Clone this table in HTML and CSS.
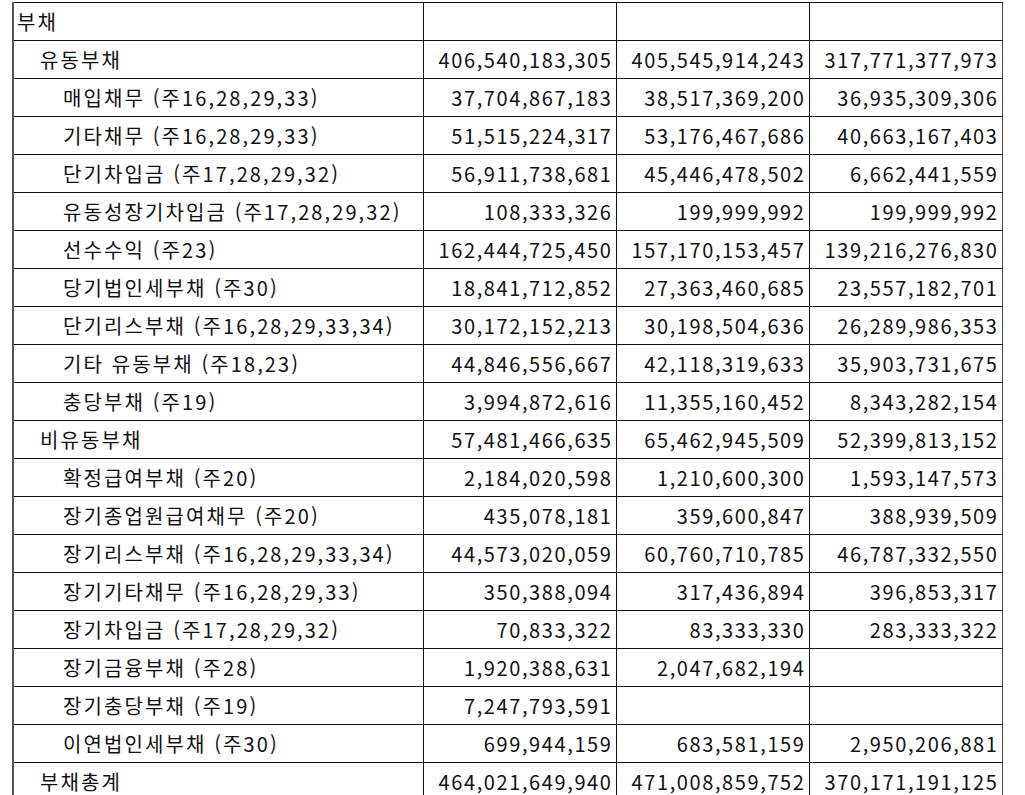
FILE: index.html
```html
<!DOCTYPE html>
<html lang="ko">
<head>
<meta charset="utf-8">
<link rel="stylesheet" href="styles.css">
</head>
<body>
<table class="fs">
<colgroup><col class="c-label"><col class="c-num"><col class="c-num"><col class="c-num"></colgroup>
<tbody>
<tr><td class="l0">부채</td><td></td><td></td><td></td></tr>
<tr><td class="l1">유동부채</td><td class="n">406,540,183,305</td><td class="n">405,545,914,243</td><td class="n">317,771,377,973</td></tr>
<tr><td class="l2">매입채무 (주16,28,29,33)</td><td class="n">37,704,867,183</td><td class="n">38,517,369,200</td><td class="n">36,935,309,306</td></tr>
<tr><td class="l2">기타채무 (주16,28,29,33)</td><td class="n">51,515,224,317</td><td class="n">53,176,467,686</td><td class="n">40,663,167,403</td></tr>
<tr><td class="l2">단기차입금 (주17,28,29,32)</td><td class="n">56,911,738,681</td><td class="n">45,446,478,502</td><td class="n">6,662,441,559</td></tr>
<tr><td class="l2">유동성장기차입금 (주17,28,29,32)</td><td class="n">108,333,326</td><td class="n">199,999,992</td><td class="n">199,999,992</td></tr>
<tr><td class="l2">선수수익 (주23)</td><td class="n">162,444,725,450</td><td class="n">157,170,153,457</td><td class="n">139,216,276,830</td></tr>
<tr><td class="l2">당기법인세부채 (주30)</td><td class="n">18,841,712,852</td><td class="n">27,363,460,685</td><td class="n">23,557,182,701</td></tr>
<tr><td class="l2">단기리스부채 (주16,28,29,33,34)</td><td class="n">30,172,152,213</td><td class="n">30,198,504,636</td><td class="n">26,289,986,353</td></tr>
<tr><td class="l2">기타 유동부채 (주18,23)</td><td class="n">44,846,556,667</td><td class="n">42,118,319,633</td><td class="n">35,903,731,675</td></tr>
<tr><td class="l2">충당부채 (주19)</td><td class="n">3,994,872,616</td><td class="n">11,355,160,452</td><td class="n">8,343,282,154</td></tr>
<tr><td class="l1">비유동부채</td><td class="n">57,481,466,635</td><td class="n">65,462,945,509</td><td class="n">52,399,813,152</td></tr>
<tr><td class="l2">확정급여부채 (주20)</td><td class="n">2,184,020,598</td><td class="n">1,210,600,300</td><td class="n">1,593,147,573</td></tr>
<tr><td class="l2">장기종업원급여채무 (주20)</td><td class="n">435,078,181</td><td class="n">359,600,847</td><td class="n">388,939,509</td></tr>
<tr><td class="l2">장기리스부채 (주16,28,29,33,34)</td><td class="n">44,573,020,059</td><td class="n">60,760,710,785</td><td class="n">46,787,332,550</td></tr>
<tr><td class="l2">장기기타채무 (주16,28,29,33)</td><td class="n">350,388,094</td><td class="n">317,436,894</td><td class="n">396,853,317</td></tr>
<tr><td class="l2">장기차입금 (주17,28,29,32)</td><td class="n">70,833,322</td><td class="n">83,333,330</td><td class="n">283,333,322</td></tr>
<tr><td class="l2">장기금융부채 (주28)</td><td class="n">1,920,388,631</td><td class="n">2,047,682,194</td><td class="n"></td></tr>
<tr><td class="l2">장기충당부채 (주19)</td><td class="n">7,247,793,591</td><td class="n"></td><td class="n"></td></tr>
<tr><td class="l2">이연법인세부채 (주30)</td><td class="n">699,944,159</td><td class="n">683,581,159</td><td class="n">2,950,206,881</td></tr>
<tr><td class="l1">부채총계</td><td class="n">464,021,649,940</td><td class="n">471,008,859,752</td><td class="n">370,171,191,125</td></tr>
</tbody>
</table>
</body>
</html>
```
FILE: styles.css
```css
html, body {
  margin: 0;
  padding: 0;
  background: #fff;
}
body {
  padding: 2px 0 0 12px;
  font-family: "Noto Sans CJK KR", "Noto Sans", sans-serif;
  font-size: 20px;
  color: #111;
}
.fs {
  border-collapse: collapse;
  table-layout: fixed;
  width: 988px;
  border-left: 2px solid #555;
  border-right: 1px solid #444;
}
.c-label { width: 410px; }
.c-num { width: 193px; }
.fs tr { height: 38px; }
.fs td {
  border: 1px solid #111;
  padding: 0 4px;
  vertical-align: middle;
  white-space: nowrap;
  letter-spacing: 1.6px;
  line-height: 1;
}
.fs td:first-child { border-left: 2px solid #555; letter-spacing: 2.1px; }
.fs td:last-child { border-right: 1px solid #444; }
.l0 { padding-left: 3px !important; }
.l1 { padding-left: 26px !important; }
.l2 { padding-left: 49px !important; }
.n { text-align: right; padding-right: 3px !important; }
```
